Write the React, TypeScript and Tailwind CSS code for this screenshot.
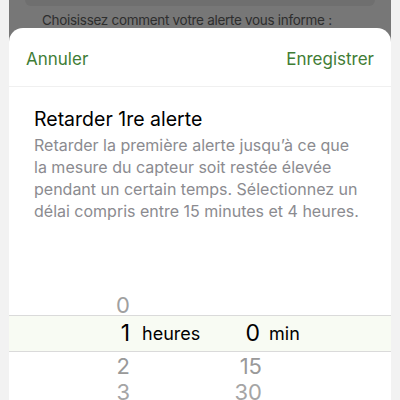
export default function App() {
  const font = { fontFamily: 'Inter, "Liberation Sans", sans-serif' };
  return (
    <div className="w-[400px] h-[400px] bg-[#f2f2f2] flex px-[9px] overflow-hidden" style={font}>
      <div className="flex-1 bg-[#777777] flex flex-col overflow-hidden">
        {/* dimmed page behind the sheet */}
        <div className="h-[28px] shrink-0 overflow-hidden">
          <div className="mx-[16px] h-[6px] bg-[#6f6f6f] rounded-b-[10px]" />
          <p className="pl-[33px] pt-[5px] text-[13.5px] leading-[18px] tracking-[-0.3px] text-[#2e2e2e] whitespace-nowrap">
            Choisissez comment votre alerte vous informe :
          </p>
        </div>

        {/* bottom sheet */}
        <div className="flex-1 bg-white rounded-t-[14px] flex flex-col overflow-hidden">
          <div className="h-[59px] shrink-0 flex items-center justify-between px-[17px] pt-[6px] border-b border-[#f0f0f0] text-[17px] text-[#3f7d36]">
            <span>Annuler</span>
            <span>Enregistrer</span>
          </div>

          <div className="pl-[25px] pr-[28px] pt-[19px] shrink-0">
            <h2 className="text-[19.5px] leading-[26px] text-black">Retarder 1re alerte</h2>
            <p className="mt-[2px] text-[16px] leading-[22px] text-[#8b8b90]">
              Retarder la première alerte jusqu’à ce que la mesure du capteur soit restée élevée pendant un certain temps. Sélectionnez un délai compris entre 15 minutes et 4 heures.
            </p>
          </div>

          {/* picker */}
          <div className="mt-[67px] shrink-0 flex flex-col">
            <div className="h-[26px] flex items-end">
              <span className="w-[121px] text-right text-[22px] leading-[20px] text-[#a0a0a0]">0</span>
            </div>
            <div className="h-[37px] flex items-center bg-[#f8fbf3] border-y border-[#dadada]">
              <span className="w-[121px] text-right text-[23px] text-black">1</span>
              <span className="w-[130px] flex items-center justify-between">
                <span className="pl-[12px] text-[18px] text-black">heures</span>
                <span className="text-[23px] text-black">0</span>
              </span>
              <span className="ml-[9px] text-[18px] text-black">min</span>
            </div>
            <div className="h-[28px] flex items-center">
              <span className="w-[121px] text-right text-[22px] text-[#999999]">2</span>
              <span className="w-[132px] text-right text-[22px] text-[#999999]">15</span>
            </div>
            <div className="h-[24px] flex items-center">
              <span className="w-[121px] text-right text-[22px] text-[#a5a5a5]">3</span>
              <span className="w-[132px] text-right text-[22px] text-[#a5a5a5]">30</span>
            </div>
          </div>
        </div>
      </div>
    </div>
  );
}
